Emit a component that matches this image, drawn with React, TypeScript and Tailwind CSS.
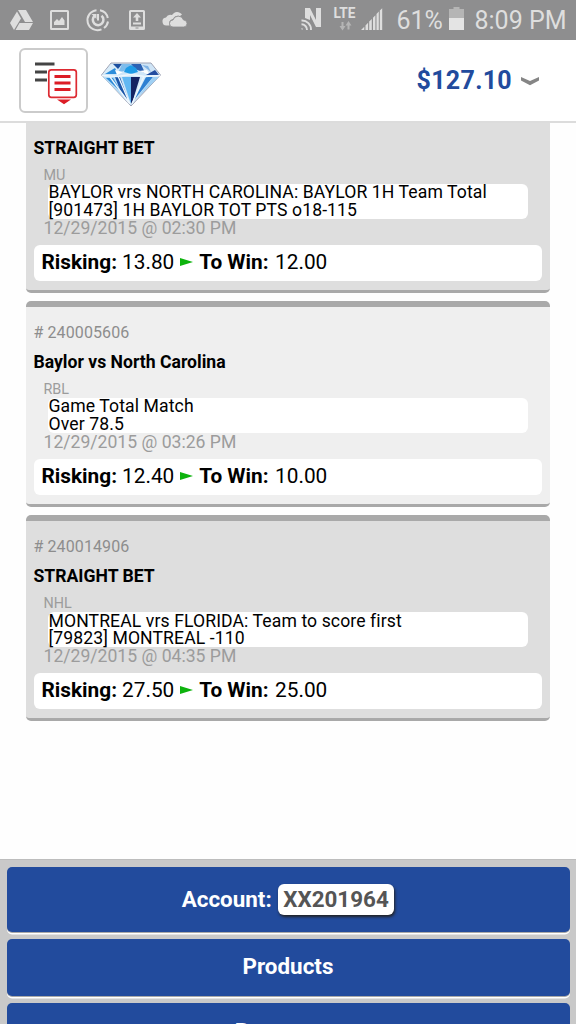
import React from 'react';

interface Bet {
  ticket?: string;
  title: string;
  league: string;
  lines: string[];
  placed: string;
  risk: string;
  win: string;
}

const bets: Bet[] = [
  {
    title: 'STRAIGHT BET',
    league: 'MU',
    lines: ['BAYLOR vrs NORTH CAROLINA: BAYLOR 1H Team Total', '[901473] 1H BAYLOR TOT PTS o18-115'],
    placed: '12/29/2015 @ 02:30 PM',
    risk: '13.80',
    win: '12.00'
  },
  {
    ticket: '240005606',
    title: 'Baylor vs North Carolina',
    league: 'RBL',
    lines: ['Game Total Match', 'Over 78.5'],
    placed: '12/29/2015 @ 03:26 PM',
    risk: '12.40',
    win: '10.00'
  },
  {
    ticket: '240014906',
    title: 'STRAIGHT BET',
    league: 'NHL',
    lines: ['MONTREAL vrs FLORIDA: Team to score first', '[79823] MONTREAL -110'],
    placed: '12/29/2015 @ 04:35 PM',
    risk: '27.50',
    win: '25.00'
  }
];

const NotificationIcons: React.FC = () => (
  <svg width="200" height="40" viewBox="0 0 200 40" fill="#dedede">
    {/* Drive */}
    <path d="M18 10h8l7 12h-8zM17 11.5l4 7L14 30l-4-7zM19.5 23H33l-4 7H15.500z" />
    {/* Gallery */}
    <path fillRule="evenodd" d="M51.500 10h16a1.500 1.500 0 0 1 1.500 1.500v17a1.500 1.500 0 0 1-1.500 1.500h-16a1.500 1.500 0 0 1-1.500-1.500v-17a1.500 1.500 0 0 1 1.500-1.500zM52 12v16h15V12z" />
    <path d="M54 25v-3l3-3 2 2 3-4 2.500 3.500V25z" />
    {/* Sync */}
    <g fill="none" stroke="#dedede">
      <path d="M100 10.200A10 10 0 0 1 107.800 18M108 21.500A10 10 0 0 1 104 28M101.500 29.300A10 10 0 1 1 96.500 10.200" strokeWidth="2" />
      <path d="M94.500 16A5.300 5.300 0 1 0 101.500 15.800" strokeWidth="2.500" />
      <path d="M98 14v6.500" strokeWidth="2" />
    </g>
    <path d="M91.500 14h5v5z" />
    {/* Phone upload */}
    <path fillRule="evenodd" d="M130.500 10h13a1.500 1.500 0 0 1 1.500 1.500v17a1.500 1.500 0 0 1-1.500 1.500h-13a1.500 1.500 0 0 1-1.500-1.500v-17a1.500 1.500 0 0 1 1.500-1.500zM131 12v14.500h12V12z" />
    <path d="M137 13l4 4.500h-2.700V21h-2.600v-3.500H133zM133 22.500h8v2h-8z" />
    <path d="M135.500 27.500h3v1h-3z" fill="#8e8e8f" />
    {/* Cloud */}
    <path d="M167 25.500a4 4 0 0 1-1-8 5 5 0 0 1 6-2.500 6 6 0 0 1 10-.500l-2 1.500a6 6 0 0 0-7 3 4.500 4.500 0 0 0-3.500 6.500z" />
    <path d="M173 27a3.500 3.500 0 0 1 0-7 5.500 5.500 0 0 1 10.500 0 3.500 3.500 0 0 1 0 7z" stroke="#8e8e8f" strokeWidth="0.800" />
  </svg>
);

const SignalIcons: React.FC = () => (
  <svg width="100" height="40" viewBox="297 0 100 40" fill="#dedede" className="shrink-0">
    {/* NFC */}
    <path d="M305 18V8h5l6 12V8h5v19h-5l-6-12v5z" />
    <path d="M301.500 29.500v-1.500a1.500 1.500 0 0 1 1.500 1.500z" />
    <path d="M301.500 20.500a9 9 0 0 1 9.500 9.500M301.500 24.300a5.500 5.500 0 0 1 5.500 5.700" fill="none" stroke="#dedede" strokeWidth="1.900" />
    <text x="333.500" y="18" fontSize="14" fontWeight="700" fontFamily="Roboto, sans-serif" textLength="22" lengthAdjust="spacingAndGlyphs">LTE</text>
    <path d="M341.500 22h2v4h2l-3 4.500-3-4.500h2zM347.500 29.500h2v-4h2l-3-4.500-3 4.500h2z" fill="#b5b5b5" />
    <path d="M361 30l3.300-3.200V30zM365.500 25.500l2.600-2.700V30h-2.600zM369.200 21.600l2.600-2.700V30h-2.600zM373 17.700l2.400-2.500V30H373zM376.500 14l2.300-2.400V30h-2.300zM379.800 10.600l2.400-2.400V30h-2.400z" />
  </svg>
);

const StatusBar: React.FC = () => (
  <div className="h-10 flex items-center bg-[#8e8e8f] text-[#dedede]">
    <NotificationIcons />
    <div className="ml-auto flex items-center pr-[9.500px]">
      <SignalIcons />
      <span className="w-[52px] pt-0.5 text-[25px] leading-10 whitespace-nowrap">61%</span>
      <svg width="15" height="24" viewBox="0 0 15 24" className="mr-[11px] -mt-[2px] shrink-0">
        <path d="M4.500 0h6v2H15v9H0V2h4.500z" fill="#b5b5b5" />
        <path d="M0 11h15v12H0z" fill="#e4e4e4" />
      </svg>
      <span className="w-[92px] pt-0.5 text-[25px] leading-10 whitespace-nowrap">8:09 PM</span>
    </div>
  </div>
);

const Diamond: React.FC = () => (
  <svg width="60" height="46" viewBox="0 0 60 46">
    <path d="M10 1h40l9.500 12L30 44 .500 13z" fill="#cfe6f8" stroke="#a0a3b4" strokeWidth="1" />
    <path d="M10 2h10l-7 10H2z" fill="#d9ecf9" />
    <path d="M12 2h9l-4 5z" fill="#1b4fa0" />
    <path d="M21 2h9l-4 6-9 3z" fill="#7dbcec" />
    <path d="M30 2h10l4 9-10-4z" fill="#2c62b4" />
    <path d="M40 2h9l8 10-11-1z" fill="#cfe4f6" />
    <path d="M41 3l6 1 3 6z" fill="#7fb2e4" />
    <path d="M25 6l5-3 5 3 2 4-7 2-7-2z" fill="#1e9be6" />
    <path d="M4 12l10-6 3 6z" fill="#2e8edb" />
    <path d="M14 8l8 2-6 3z" fill="#fff" />
    <path d="M38 9l8-1 3 5z" fill="#fff" />
    <path d="M45 13l9-5 4 5z" fill="#234c9f" />
    <path d="M2 15h15l12 27z" fill="#b5dcf7" />
    <path d="M5 16h7l9 15z" fill="#2d8bd8" />
    <path d="M14 15h5l9 25-9-12z" fill="#1b55a8" />
    <path d="M21 15h9v27z" fill="#62b8f2" />
    <path d="M30 15h9l-7 23-2 4z" fill="#142463" />
    <path d="M40 15h5L31 42z" fill="#d6ebfa" />
    <path d="M45 15h7L33 38z" fill="#2e80d2" />
    <path d="M52 15h6L36 36z" fill="#9fd0f4" />
    <path d="M1 13.500l15 1 14-2 14 2 15-1M17 14l12 28M43 14L31 42M9 15l19 26" fill="none" stroke="#eef7fd" strokeWidth="1.300" />
  </svg>
);

const Header: React.FC = () => (
  <header className="h-[83px] flex items-start bg-white border-b-2 border-[#dcdcdc] pl-[19px] pr-9 pt-2">
    <button className="w-[69px] h-[65px] border-2 border-[#cbcbcb] rounded-md flex">
      <svg width="65" height="61" viewBox="21 50 65 61" className="shrink-0">
        <path d="M35 62.500h19.500v3H35zM35 70.500h12v3H35zM35 78.500h12v3H35z" fill="#444" />
        <rect x="48.800" y="69.800" width="27.500" height="27.500" rx="2.500" fill="#fff" stroke="#dd2a32" strokeWidth="1.700" />
        <path d="M54.500 75h16v3h-16zM54.500 81.500h16v3h-16zM54.500 88h16v3h-16zM57 99.500h14l-7 4.700z" fill="#dc1d26" />
      </svg>
    </button>
    <div className="ml-[12.500px] mt-[13.500px]">
      <Diamond />
    </div>
    <div className="ml-auto mt-3 flex items-center text-[#224b9d]">
      <span className="pt-px text-[25px] leading-10 font-bold tracking-[0.3px]">$127.10</span>
      <svg width="18" height="10" viewBox="0 0 18 10" className="ml-[9px] mr-px">
        <path d="M0 1l9 4 9-4v3.500L9 9.200 0 4.500z" fill="#858585" />
      </svg>
    </div>
  </header>
);

const BetCard: React.FC<{ bet: Bet; shaded: boolean }> = ({ bet, shaded }) => (
  <article
    className={`h-[206px] shrink-0 flex flex-col border-t-[6px] border-b-[3px] border-[#a9a9a9] rounded-[5px] px-2 pt-4 text-black ${
      shaded ? 'bg-[#dedede]' : 'bg-[#efefef]'
    }`}
  >
    <div className="h-5 text-base leading-5 text-[#8d8d8d] tracking-[0.1px]">{bet.ticket && `# ${bet.ticket}`}</div>
    <h2 className="mt-2 text-[17.600px] leading-[22px] font-bold">{bet.title}</h2>
    <div className="ml-[10px] mt-2 h-[17px] text-[14.400px] leading-[17px] text-[#9c9c9c]">{bet.league}</div>
    <div className="ml-[14px] mr-[14.500px] pl-px pt-[0.700px] h-[35px] bg-white rounded-md text-[17.600px] leading-[17.500px] tracking-[0.1px] whitespace-nowrap">
      {bet.lines.map((line) => (
        <div key={line}>{line}</div>
      ))}
    </div>
    <div className="ml-[10px] h-[18px] text-[17.600px] leading-[18px] text-[#9c9c9c]">{bet.placed}</div>
    <div className="mt-2 h-9 px-2 pb-0.5 flex items-center bg-white rounded-md text-[20.800px] leading-[34px]">
      <b>Risking:</b>
      <span className="ml-[5px]">{bet.risk}</span>
      <svg width="13" height="8" viewBox="0 0 13 8" className="ml-1.5 mr-1.5">
        <path d="M0 0l13 4-13 4z" fill="#0db30d" />
      </svg>
      <b>To Win:</b>
      <span className="ml-[6.500px]">{bet.win}</span>
    </div>
  </article>
);

const FooterButton: React.FC<{ className: string; children: React.ReactNode }> = ({ className, children }) => (
  <button
    className={`w-full shrink-0 flex items-center justify-center bg-[#224b9d] rounded-[5px] text-white text-[22.400px] font-bold shadow-[0_1px_0_#a9a9a9,0_2.500px_0_#fff] ${className}`}
  >
    {children}
  </button>
);

const App: React.FC = () => (
  <div className="w-[576px] h-[1024px] flex flex-col overflow-hidden bg-[#fefefe] font-['Roboto',sans-serif]">
    <StatusBar />
    <Header />
    <main className="h-[736px] overflow-hidden pl-[25.500px] pr-[26px]">
      <div className="-mt-[36.500px] flex flex-col gap-[8.300px]">
        {bets.map((bet, i) => (
          <BetCard key={bet.placed} bet={bet} shaded={i % 2 === 0} />
        ))}
      </div>
    </main>
    <footer className="h-[165px] overflow-hidden flex flex-col gap-[7.500px] bg-[#c9c9c9] border-t border-[#bdbdbd] px-[6.500px] pt-[7px]">
      <FooterButton className="h-[64.500px] pt-px">
        Account:
        <span className="ml-1.5 h-[31px] px-[5.500px] flex items-center bg-white rounded-md text-[#555] shadow-[1px_2px_3px_#222]">XX201964</span>
      </FooterButton>
      <FooterButton className="h-[56.500px]">Products</FooterButton>
      <FooterButton className="h-[56.500px] pt-0.5">Resources</FooterButton>
    </footer>
  </div>
);

export default App;
